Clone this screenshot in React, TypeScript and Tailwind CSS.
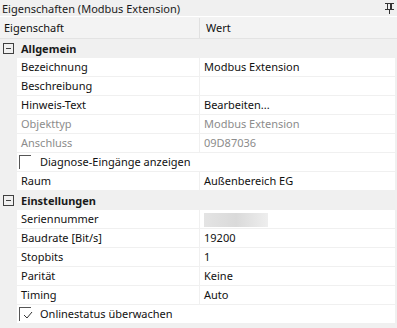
import React from "react";

type Row =
  | { kind: "cat"; label: string }
  | { kind: "prop"; label: string; value?: string; muted?: boolean; blur?: boolean }
  | { kind: "check"; label: string; checked: boolean };

const rows: Row[] = [
  { kind: "cat", label: "Allgemein" },
  { kind: "prop", label: "Bezeichnung", value: "Modbus Extension" },
  { kind: "prop", label: "Beschreibung", value: "" },
  { kind: "prop", label: "Hinweis-Text", value: "Bearbeiten..." },
  { kind: "prop", label: "Objekttyp", value: "Modbus Extension", muted: true },
  { kind: "prop", label: "Anschluss", value: "09D87036", muted: true },
  { kind: "check", label: "Diagnose-Eingänge anzeigen", checked: false },
  { kind: "prop", label: "Raum", value: "Außenbereich EG" },
  { kind: "cat", label: "Einstellungen" },
  { kind: "prop", label: "Seriennummer", blur: true },
  { kind: "prop", label: "Baudrate [Bit/s]", value: "19200" },
  { kind: "prop", label: "Stopbits", value: "1" },
  { kind: "prop", label: "Parität", value: "Keine" },
  { kind: "prop", label: "Timing", value: "Auto" },
  { kind: "check", label: "Onlinestatus überwachen", checked: true },
];

const Expander = () => (
  <svg width="11" height="11" viewBox="0 0 11 11" className="block">
    <rect x="0.5" y="0.5" width="10" height="10" fill="none" stroke="#404040" />
    <line x1="3" y1="5.5" x2="8" y2="5.5" stroke="#404040" />
  </svg>
);

const Pin = () => (
  <svg width="9" height="11" viewBox="0 0 9 11" className="block">
    <rect x="0" y="0" width="9" height="1" fill="#333" />
    <rect x="2" y="1" width="1" height="5" fill="#333" />
    <rect x="5" y="1" width="2" height="5" fill="#333" />
    <rect x="0" y="6" width="9" height="1" fill="#333" />
    <rect x="4" y="7" width="1" height="4" fill="#333" />
  </svg>
);

const CheckBox = ({ checked }: { checked: boolean }) => (
  <div className="relative w-[12px] h-[14px] border-l border-t border-[#555]">
    {checked && (
      <svg width="10" height="9" viewBox="0 0 10 9" className="absolute left-[3px] top-[3px]">
        <polyline points="1,4 4,7 9,1" fill="none" stroke="#333" strokeWidth="1" />
      </svg>
    )}
  </div>
);

export default function App() {
  return (
    <div
      className="w-[397px] h-[328px] bg-[#f0f0f0] text-[11px] text-[#111] overflow-hidden"
      style={{ fontFamily: '"Noto Sans", "Open Sans", sans-serif' }}
    >
      {/* Title bar */}
      <div className="h-[16px] flex items-center justify-between pl-[2px] pr-[3px] pt-[1px] bg-[#f0f0f0] leading-none">
        <span className="text-[#1a1a1a]">Eigenschaften (Modbus Extension)</span>
        <Pin />
      </div>
      <div className="h-[1px] bg-white" />

      {/* Column header */}
      <div className="h-[22px] grid grid-cols-[200px_1fr] bg-[#f3f3f3] border-b border-[#e3e3e3] pt-[1px]">
        <div className="flex items-center pl-[4px] border-r border-[#e0e0e0]">Eigenschaft</div>
        <div className="flex items-center pl-[6px]">Wert</div>
      </div>

      {/* Rows */}
      <div className="flex flex-col">
        {rows.map((r, i) => {
          if (r.kind === "cat") {
            return (
              <div key={i} className="h-[19px] flex items-center bg-[#f0f0f0]">
                <div className="w-[17px] flex justify-center">
                  <Expander />
                </div>
                <span className="pl-[4px] pt-[1px] font-bold text-[#1a1a1a]">{r.label}</span>
              </div>
            );
          }
          if (r.kind === "check") {
            return (
              <div key={i} className="h-[19px] flex">
                <div className="w-[17px]" />
                <div className="flex-1 flex items-center gap-[9px] pl-[2px] bg-white border-b border-[#f0f0f0] mr-[2px]">
                  <CheckBox checked={r.checked} />
                  <span className="pt-[1px]">{r.label}</span>
                </div>
              </div>
            );
          }
          return (
            <div key={i} className="h-[19px] flex">
              <div className="w-[17px]" />
              <div
                className={`w-[183px] flex items-center pl-[4px] pt-[1px] bg-white border-b border-r border-[#f0f0f0] ${
                  r.muted ? "text-[#8c8c8c]" : ""
                }`}
              >
                {r.label}
              </div>
              <div
                className={`flex-1 flex items-center pl-[4px] pt-[1px] bg-white border-b border-[#f0f0f0] mr-[2px] ${
                  r.muted ? "text-[#8c8c8c]" : ""
                }`}
              >
                {r.blur ? (
                  <div className="w-[64px] h-[14px] bg-gradient-to-r from-[#e4e4e4] via-[#dadada] to-[#eeeeee]" />
                ) : (
                  r.value
                )}
              </div>
            </div>
          );
        })}
      </div>
    </div>
  );
}
